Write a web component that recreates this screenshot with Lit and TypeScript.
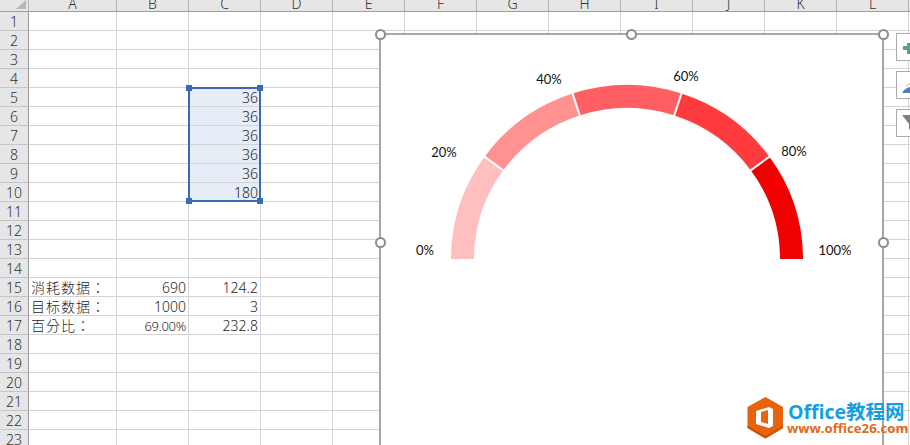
import { LitElement, html, css, svg } from "lit";
import { customElement } from "lit/decorators.js";

const COLS: [string, number][] = [["A",88],["B",72],["C",72],["D",72],["E",72],["F",72],["G",72],["H",72],["I",72],["J",72],["K",72],["L",72],["M",72]];
const VALUES: Record<string, string> = {
  "A15":"消耗数据：","B15":"690","C15":"124.2",
  "A16":"目标数据：","B16":"1000","C16":"3",
  "A17":"百分比：","B17":"69.00%","C17":"232.8",
  "C5":"36","C6":"36","C7":"36","C8":"36","C9":"36","C10":"180",
};
const SEGMENTS = ["#ffbfbf","#ff9191","#ff5f63","#ff3b3e","#f00000"];
const LABELS: [string, number, number][] = [["0%",45,221],["20%",64,123],["40%",169,50],["60%",306,47],["80%",414,122],["100%",455,221]];
const CX = 247, CY = 225, RX = 176, RY = 174, IX = 153, IY = 151;

const pt = (rx: number, ry: number, a: number) => `${(CX - rx * Math.cos(a)).toFixed(2)} ${(CY - ry * Math.sin(a)).toFixed(2)}`;
function arc(i: number) {
  const a0 = Math.PI * i / 5, a1 = Math.PI * (i + 1) / 5;
  return `M${pt(RX,RY,a0)} A${RX} ${RY} 0 0 1 ${pt(RX,RY,a1)} L${pt(IX,IY,a1)} A${IX} ${IY} 0 0 0 ${pt(IX,IY,a0)} Z`;
}
function gap(i: number) {
  const a = Math.PI * i / 5;
  return `M${pt(RX + 1,RY + 1,a)} L${pt(IX - 1,IY - 1,a)}`;
}

@customElement("app-root")
export class AppRoot extends LitElement {
  static styles = css`
    :host { display: block; width: 910px; height: 445px; overflow: hidden; position: relative; background: #fff;
      font-family: "Noto Sans", "Noto Sans CJK TC", sans-serif; }
    .sheet { display: grid; grid-template-columns: 29px 88px repeat(12, 72px); grid-template-rows: 12px; grid-auto-rows: 19px; width: 1100px; }
    .corner, .colh, .rowh { background: #e6e6e6; color: #333; display: flex; justify-content: center; box-sizing: border-box; }
    .corner { border-right: 1px solid #b4b4b4; border-bottom: 1px solid #9e9e9e; position: relative; overflow: hidden; }
    .corner::after { content: ""; position: absolute; right: 2px; bottom: 2px; width: 0; height: 0; border-left: 10px solid transparent; border-bottom: 9px solid #b8b8b8; }
    .colh { border-right: 1px solid #b4b4b4; border-bottom: 1px solid #9e9e9e; font-size: 14px; line-height: 7px; height: 12px; overflow: hidden; font-weight: 300; }
    .rowh { border-right: 1px solid #9e9e9e; border-bottom: 1px solid #c6c6c6; font-size: 14px; line-height: 20px; font-weight: 300; }
    .cell { box-sizing: border-box; border-right: 1px solid #d4d4d4; border-bottom: 1px solid #d4d4d4; font-size: 14px; line-height: 20px; color: #262626; font-weight: 300; text-align: right; padding: 0 2px; white-space: nowrap; overflow: visible; }
    .cell.text { text-align: left; font-size: 14px; letter-spacing: 1px; }
    .cell.pct { font-size: 13px; letter-spacing: -0.3px; }
    .cell.sel { background: #e7edf7; }
    .selection { position: absolute; left: 188px; top: 87px; width: 73px; height: 115px; box-sizing: border-box; border: 2px solid #3a6ab4; }
    .sh { position: absolute; width: 6px; height: 6px; background: #3a6ab4; }
    .sh.tl { left: -4px; top: -4px; } .sh.tr { right: -4px; top: -4px; } .sh.bl { left: -4px; bottom: -4px; } .sh.br { right: -4px; bottom: -4px; }
    .chart { position: absolute; left: 379px; top: 33px; width: 505px; height: 420px; box-sizing: border-box; background: #fff; border: 2px solid #a6a6a6; }
    .chart svg { display: block; position: absolute; left: -1px; top: -1px; }
    .chart text { font-family: "Lato", "Noto Sans", sans-serif; font-size: 13px; fill: #111; text-anchor: middle; }
    .h { position: absolute; width: 11px; height: 11px; border-radius: 50%; background: #fff; border: 2px solid #8c8c8c; box-sizing: border-box; }
    .tools { position: absolute; left: 896px; top: 33px; display: flex; flex-direction: column; gap: 10px; }
    .tool { width: 30px; height: 28px; box-sizing: border-box; background: #fff; border: 1px solid #ababab; border-right: 0; display: block; }
    .tool svg { display: block; }
    .logo { position: absolute; left: 747px; top: 397px; display: flex; gap: 4px; align-items: flex-start; }
    .logo-text { display: flex; flex-direction: column; margin-top: 5px; }
    .l1 { font: 700 19.5px/20px "Open Sans", "Noto Sans CJK SC", sans-serif; color: #14a0e0; white-space: nowrap; }
    .l2 { font: 700 13.2px/14px "Open Sans", sans-serif; color: #e0691a; white-space: nowrap; margin-top: -1px; margin-left: -1px; }
  `;

  render() {
    const rows = Array.from({ length: 24 }, (_, i) => i + 1);
    return html`
      <div class="sheet">
        <div class="corner"></div>
        ${COLS.map(c => html`<div class="colh">${c[0]}</div>`)}
        ${rows.map(n => html`
          <div class="rowh">${n}</div>
          ${COLS.map(c => {
            const k = c[0] + n;
            const v = VALUES[k] ?? "";
            const cls = ["cell", c[0] === "A" ? "text" : "", k === "B17" ? "pct" : "", c[0] === "C" && n >= 5 && n <= 10 ? "sel" : ""].join(" ");
            return html`<div class=${cls}>${v}</div>`;
          })}
        `)}
      </div>
      <div class="selection">
        <i class="sh tl"></i><i class="sh tr"></i><i class="sh bl"></i><i class="sh br"></i>
      </div>
      <div class="chart">
        <svg width="505" height="420" viewBox="0 0 505 420">
          ${SEGMENTS.map((c, i) => svg`<path d=${arc(i)} fill=${c}></path>`)}
          ${[1,2,3,4].map(i => svg`<path d=${gap(i)} stroke="#fff" stroke-width="2"></path>`)}
          ${LABELS.map(l => svg`<text x=${l[1]} y=${l[2]}>${l[0]}</text>`)}
        </svg>
      </div>
      ${[[380,34],[631,34],[883,34],[380,242],[883,242]].map(p => html`<div class="h" style="left:${p[0]-5}px;top:${p[1]-5}px"></div>`)}
      <div class="tools">
        <div class="tool"><svg width="14" height="26"><path d="M10 9h4v3h-1 1v4h-1v4h-3v-4H6v-4h4z" fill="#5a9e8c"></path></svg></div>
        <div class="tool"><svg width="14" height="26"><path d="M5 21 Q8 16 13 15 V21Z" fill="#4f7fb5"></path><path d="M9 14 L14 11" stroke="#b0b0b0" stroke-width="1"></path></svg></div>
        <div class="tool"><svg width="14" height="26"><path d="M5 5H14V21L12 19V14Z" fill="#808080"></path></svg></div>
      </div>
      <div class="logo">
        <svg width="37" height="42" viewBox="0 0 37 42">
          <path d="M18.5 0 L36 10 V31 L18.5 41.5 L0.5 31 V10Z" fill="#e8640c"></path>
          <path d="M0.5 31 L18.5 41.5 L36 31 V28.5 L18.5 39 L0.5 28.5Z" fill="#c9520a"></path>
          <path d="M9 14 L22 10 L26 12 V29 L22 31 L9 27Z M14 15 V25 L21 27 V13Z" fill="#fff" fill-rule="evenodd"></path>
        </svg>
        <div class="logo-text">
          <div class="l1">Office教程网</div>
          <div class="l2">www.office26.com</div>
        </div>
      </div>
    `;
  }
}
